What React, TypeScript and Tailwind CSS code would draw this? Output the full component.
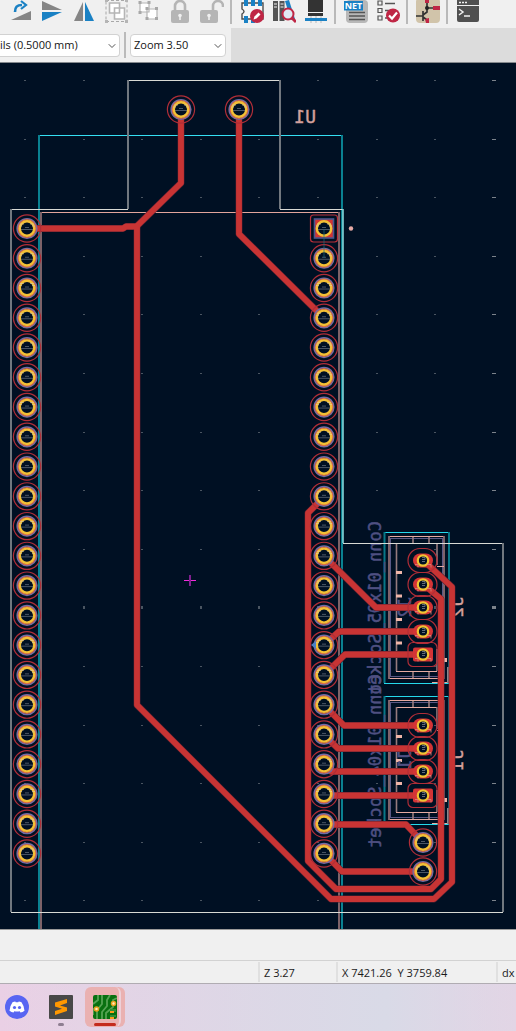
import React from "react";
import { ChevronDown } from "lucide-react";

const TRACKS = [
  "M181 109V183L137 226V705L331 899H434L452 882V587L423 560",
  "M27 228.5H123L126 226.5H137",
  "M239 109V234L324 318",
  "M324 497L308 513V861L336 889H431L441 879V599L423 584",
  "M324 556L376 607.5H423",
  "M324 645L339 631.5H423",
  "M324 675L345 654.5H423",
  "M324 705L344 725.5H423",
  "M324 735L338 748.5H423",
  "M324 764L331 771.5H423",
  "M324 795.5H423",
  "M324 824.5H406L423 842.5",
  "M324 853L342 871.5H423",
];

const ROWS = Array.from({ length: 22 }, (_, i) => 228.5 + i * 29.76);
const GRID_X = Array.from({ length: 9 }, (_, i) => Math.round(25 + i * 58.6));
const GRID_Y = Array.from({ length: 15 }, (_, i) => Math.round(80 + i * 58.6));

function Pad({ x, y, square = false }: { x: number; y: number; square?: boolean }) {
  return (
    <g transform={`translate(${x} ${y})`} fill="none">
      {square ? (
        <>
          <rect x="-13.5" y="-13.5" width="27" height="27" rx="3" stroke="#b8303a" strokeWidth="1.2" />
          <rect x="-9.5" y="-9.5" width="19" height="19" fill="#d03434" stroke="#4a558c" strokeWidth="1.6" />
        </>
      ) : (
        <>
          <circle r="13.6" stroke="#b02e38" strokeWidth="1.2" />
          <circle r="9.8" stroke="#6f6ca6" strokeWidth="1.6" fill="#061022" />
          <circle r="8.7" stroke="#d8684a" strokeWidth="1.4" />
        </>
      )}
      <circle r="7.2" stroke="#f3c035" strokeWidth="2.4" fill="#001023" />
      <path d="M-7 -4.5h4M3 -4.500h4M-8 -2.500h3M5 -2.500h3" stroke="#e0cdb0" opacity=".6" />
      <path d="M-6 1h12M-2 -1h4" stroke="#6b7582" opacity=".7" />
    </g>
  );
}

function OvalPad({ x, y, square = false }: { x: number; y: number; square?: boolean }) {
  return (
    <g transform={`translate(${x} ${y})`} fill="none">
      <rect x="-15" y="-12" width="29" height="24" rx={square ? 5 : 12} stroke="#b02e38" strokeWidth="1.2" />
      <rect x="-10" y="-7" width="20" height="14" rx={square ? 2 : 7} fill="#d43436" />
      <circle r="5.2" stroke="#efc433" strokeWidth="2.2" fill="#001023" />
      <path d="M-8 4h3v3M4 4h4v3" stroke="#db8b80" opacity=".8" />
      <path d="M-1 -3h3v2h-3M-1 1h3" stroke="#8a929b" opacity=".7" />
    </g>
  );
}

function Socket({ top, bottom, bars, mark }: { top: number; bottom: number; bars: number[]; mark: number }) {
  return (
    <g fill="none">
      <path d={`M384 ${top}.5H449M384 ${bottom}.5H449`} stroke="#25d9ec" />
      <path d={`M384.5 ${top}V${bottom}M449 ${top}V${bottom}`} stroke="#077888" strokeWidth="2" />
      <path d={`M389 ${top + 4}.5H444M389 ${bottom - 5}.5H444`} stroke="#e5aaa1" />
      <path d={`M389 ${top + 4}V${bottom - 4}M444 ${top + 4}V${bottom - 4}`} stroke="#8a6c72" strokeWidth="1.8" />
      <rect x="390.5" y={top + 6.5} width="52" height={bottom - top - 13} stroke="#5a5885" />
      <path d={`M396 ${top + 11}.5H437M396 ${bottom - 12}.5H437`} stroke="#e5aaa1" />
      <path
        d={`M396.5 ${top + 11}V${bottom - 12}M437 ${top + 11}V${top + 33}M437 ${bottom - 34}V${bottom - 12}M413 ${top + 5}v6M429 ${top + 5}v6M413 ${bottom - 11}v6M429 ${bottom - 11}v6`}
        stroke="#967a7d"
        strokeWidth="1.6"
      />
      <path d={`M437 ${top + 34}.5h7M432 ${bottom - 1}.5h16`} stroke="#e5aaa1" />
      <path d={`M448 ${bottom}v-16`} stroke="#8d8589" strokeWidth="2" />
      {bars.map((y) => (
        <path key={y} d={`M396 ${y}h6`} stroke="#efb5a8" strokeWidth="3" />
      ))}
      <path d={`M445 ${mark - 2}v4`} stroke="#efb5a8" strokeWidth="4" />
    </g>
  );
}

function Board() {
  return (
    <svg className="block h-auto w-full bg-[#001023]" viewBox="0 63 516 866" role="img" aria-label="Circuit board layout">
      {GRID_Y.map((y) =>
        GRID_X.map((x, i) => (
          <rect
            key={`${x}-${y}`}
            x={i === 8 ? x - 2 : x - 1}
            y={y === 607 ? y - 1 : y}
            width={i === 8 ? 4 : 2}
            height={y === 607 ? 3 : 1}
            fill={i === 8 ? "#7c838b" : "#4a5561"}
          />
        )),
      )}

      <Socket top={532} bottom={683} bars={[572.5, 596, 619.5, 643]} mark={660} />
      <Socket top={696} bottom={824} bars={[736.5, 760.5, 783.5]} mark={800} />

      <g fontFamily="'DejaVu Sans Mono', monospace" fontSize="17" fill="#4f5082" stroke="#4f5082" strokeWidth="0.5">
        <text transform="matrix(0 1 1 0 381 521)">Conn_01x05_Socket</text>
        <text transform="matrix(0 1 1 0 381 674)">Conn_01x04_Socket</text>
        <text transform="matrix(0 1 1 0 411 597)">J2</text>
        <text transform="matrix(0 1 1 0 411 749)">J1</text>
      </g>
      <g fontFamily="'DejaVu Sans Mono', monospace" fill="#d3a09c" stroke="#d3a09c" strokeWidth="0.4">
        <text fontSize="18" transform="matrix(-1 0 0 1 316 123)">U1</text>
        <text fontSize="17" transform="matrix(0 1 1 0 463 597)">J2</text>
        <text fontSize="17" transform="matrix(0 1 1 0 463 750)">J1</text>
      </g>

      <g fill="none">
        <path d="M41 212.5H339" stroke="#e2a59c" />
        <path d="M41 212V929M339 212V929" stroke="#7d6268" strokeWidth="2" />
        <path d="M39 135.5H342" stroke="#35dff2" />
        <path d="M39 135V929M342 135V929" stroke="#0a8292" strokeWidth="2" />
        <path d="M11 209.5H128M128 80.5H280M280 209.5H343M343 543.5H503M11 912.5H503" stroke="#d8dad5" />
        <path d="M11 209V912M128 80V209M280 80V209M503 543V912" stroke="#71787f" strokeWidth="2" />
        <path d="M343 209V543" stroke="#83d5d8" strokeWidth="1.6" />
      </g>

      <g fill="none" strokeLinecap="round" strokeLinejoin="round">
        {TRACKS.map((d) => (
          <path key={d} d={d} stroke="#5b2030" strokeWidth="6.8" />
        ))}
        {TRACKS.map((d) => (
          <path key={d} d={d} stroke="#c83434" strokeWidth="5.8" />
        ))}
      </g>

      {ROWS.map((y) => (
        <Pad key={y} x={27} y={y} />
      ))}
      {ROWS.map((y, i) => (
        <Pad key={y} x={324} y={y} square={i === 0} />
      ))}
      <path d="M311 645l5 -4v8z" fill="#4d7fc4" />
      <path d="M324 229V258" stroke="#1b6b79" opacity=".7" />
      <Pad x={181} y={109.5} />
      <Pad x={239} y={109.5} />
      <Pad x={423} y={842.5} />
      <Pad x={423} y={871.5} />
      {[560.5, 584.5, 607.5, 631.5, 654.5].map((y, i) => (
        <OvalPad key={y} x={423} y={y} square={i === 4} />
      ))}
      {[725.5, 748.5, 771.5, 795.5].map((y, i) => (
        <OvalPad key={y} x={423} y={y} square={i === 3} />
      ))}

      <circle cx="351" cy="228.5" r="2.2" fill="#e6aaa5" />
      <path d="M184 580.5h12" stroke="#f22bdc" />
      <path d="M190 575v11" stroke="#80208f" strokeWidth="2" />
    </svg>
  );
}

function ToolButton({ label, children }: { label: string; children: React.ReactNode }) {
  return (
    <button type="button" aria-label={label} className="h-7 w-6 shrink-0">
      <svg viewBox="0 0 24 28" className="block h-7 w-6" fill="none">
        {children}
      </svg>
    </button>
  );
}

function Divider() {
  return <span className="h-6 w-0.5 shrink-0 bg-[#b9b9b9]" />;
}

function Lock({ open = false }: { open?: boolean }) {
  return (
    <>
      <path d={open ? "M13 11V6a5 5 0 0 1 10 0v1" : "M7 11V6a5 5 0 0 1 10 0v5"} stroke="#b5b5b5" strokeWidth="2.6" />
      <rect x={open ? 0 : 3} y="10" width="18" height="13" rx="2" fill="#b5b5b5" />
      <circle cx={open ? 9 : 12} cy="15.5" r="1.8" fill="#f0f0f0" />
      <path d={open ? "M9 16v4" : "M12 16v4"} stroke="#f0f0f0" strokeWidth="1.6" />
    </>
  );
}

function Toolbar() {
  return (
    <div className="flex h-7 items-start gap-1.5 overflow-hidden bg-[#f0f0f0] pl-2">
      <div className="flex gap-2">
        <ToolButton label="Rotate">
          <path d="M3 20h20v-9z" fill="#858585" />
          <path d="M7 12C7 7 9 5 14 5" stroke="#1a81c4" strokeWidth="2.6" />
          <path d="M12 0M13 1l5 4l-5 4" stroke="#1a81c4" strokeWidth="2.2" />
        </ToolButton>
        <ToolButton label="Flip vertically">
          <path d="M2 1v9h20z" fill="#858585" />
          <path d="M2 21v-9h20z" fill="#1a81c4" />
        </ToolButton>
        <ToolButton label="Flip horizontally">
          <path d="M11 2v19H2z" fill="#858585" />
          <path d="M13 2v19h9z" fill="#1a81c4" />
        </ToolButton>
        <ToolButton label="Group">
          <rect x="2" y="0.5" width="21" height="21" stroke="#a8a8a8" strokeDasharray="3 2" />
          <path d="M1 0h3v2H1zM21 0h3v2h-3zM1 20h3v3H1zM21 20h3v3h-3z" fill="#b5b5b5" />
          <path d="M5.500 3h10v10h-10zM10.500 8h10v11h-10z" fill="#fff" stroke="#b5b5b5" strokeWidth="1.6" />
        </ToolButton>
        <ToolButton label="Ungroup">
          <path d="M4 3h9v9H4zM11 9h10v10H11z" fill="#fff" stroke="#b5b5b5" strokeWidth="1.2" />
          <path d="M2.500 1h3v3h-3zM11.500 1h3v3h-3zM2.500 11h3v3h-3zM9.500 7h3v3h-3zM19 7h3v3h-3zM9.500 17h3v3h-3zM19 17h3v3h-3z" fill="#a8a8a8" />
        </ToolButton>
        <ToolButton label="Lock">
          <Lock />
        </ToolButton>
        <ToolButton label="Unlock">
          <Lock open />
        </ToolButton>
      </div>
      <div className="flex gap-2">
        <Divider />
        <ToolButton label="Edit footprint">
          <path d="M2 3h21v16H2v-5q4 -2.500 0 -5z" fill="#f6f6f6" stroke="#4d4d4d" strokeWidth="1.4" />
          <path d="M4 0h4v6H4zM11 0h4v6h-4zM18 0h4v6h-4zM4 16h4v7H4zM11 16h4v7h-4z" fill="#1a81c4" />
          <circle cx="17" cy="16" r="7" fill="#bf2645" />
          <path d="M13.500 19.500l1-3l4-4l2 2l-4 4z" fill="#fff" />
        </ToolButton>
        <ToolButton label="Browse footprints">
          <path d="M1 1h5v20H1zM7.500 1h5v20h-5z" fill="#545454" />
          <path d="M2 4h3M2 7h3M8.500 4h3M8.500 7h3" stroke="#f0f0f0" />
          <path d="M13 1l4-1l6 19l-4 1z" fill="#1a81c4" />
          <circle cx="16" cy="14" r="5.5" fill="#dfeaf3" stroke="#bf2645" strokeWidth="2" />
          <path d="M20 18l4 4" stroke="#bf2645" strokeWidth="3" />
        </ToolButton>
        <ToolButton label="3D viewer">
          <path d="M4 0h15v12H4zM4 13h15v3H4z" fill="#333" />
          <path d="M7 16v7M12 16v7M17 16v7" stroke="#d5d5d5" strokeWidth="2" />
          <path d="M1 18h22v3H1z" fill="#1a81c4" />
        </ToolButton>
      </div>
      <div className="flex gap-2">
        <Divider />
        <ToolButton label="Netlist">
          <rect x="2" y="0" width="22" height="23" rx="4" fill="#b8b8b8" />
          <path d="M5 12.500h16M5 16h16M5 19.500h16" stroke="#545454" strokeWidth="1.5" />
          <rect y="1" width="19" height="9.500" fill="#1a81c4" />
          <text x="9.5" y="9" textAnchor="middle" fontFamily="'Open Sans', sans-serif" fontSize="9" fontWeight="700" fill="#fff">NET</text>
        </ToolButton>
        <ToolButton label="Design rules check">
          <path d="M2 1h4v4H2zM2 8.500h4v4H2zM2 16h4v4H2z" stroke="#555" strokeWidth="1.2" />
          <path d="M9 3.500h10M9 10.500h8M9 18h3" stroke="#555" strokeWidth="1.3" />
          <circle cx="17" cy="15.500" r="7" fill="#bf2645" />
          <path d="M13 15.500l3 3l5-6" stroke="#fff" strokeWidth="2.2" />
        </ToolButton>
      </div>
      <div className="flex gap-2">
        <Divider />
        <ToolButton label="Schematic">
          <rect y="-2" width="24" height="25" rx="4" fill="#d1c4aa" />
          <path d="M11 0v12L7 15M7 11v10M0 16h7M7 17l4 3M11 8h8" stroke="#333" strokeWidth="1.7" />
          <path d="M9 0h4v3H9zM17 6h7v4h-7zM9 19l4 -1v5h-3z" fill="#bf2645" />
          <circle cx="11" cy="8" r="2" fill="#222" />
        </ToolButton>
      </div>
      <div className="flex gap-2">
        <Divider />
        <ToolButton label="Scripting console">
          <rect x="1" y="-2" width="22" height="24" rx="2" fill="#505050" />
          <path d="M1 5.500h22" stroke="#f0f0f0" />
          <path d="M3 2.500h2M6 2.500h2M9 2.500h2M3 9l4 3l-4 3M8 16h6" stroke="#f0f0f0" strokeWidth="1.5" />
        </ToolButton>
      </div>
    </div>
  );
}

function DropDown({ label, value, cut = false }: { label: string; value: string; cut?: boolean }) {
  return (
    <label className={cut ? "relative block w-[120px]" : "relative block w-24"}>
      <span className="sr-only">{label}</span>
      <select
        className={
          "block h-[23px] w-full appearance-none border border-[#d2d2d2] bg-white text-[11px] leading-[16px] text-[#151515] " +
          (cut ? "rounded-r-sm border-l-0" : "rounded-sm pl-[3px]")
        }
      >
        <option>{value}</option>
      </select>
      <ChevronDown className="pointer-events-none absolute right-0.5 top-1.5 size-3 text-[#555]" strokeWidth={2} />
    </label>
  );
}

function Taskbar() {
  return (
    <nav aria-label="Taskbar" className="flex h-12 items-start bg-linear-to-r from-[#ead0e5] via-[#e4d3e5] via-50% to-[#e2d5e5]">
      <div className="flex h-12 w-full items-start bg-linear-to-r from-transparent via-[#d9dae7] via-75% to-transparent pl-[5px]">
        <button type="button" aria-label="Discord" className="mt-[11px] size-6">
          <svg viewBox="0 0 24 24" className="size-6">
            <circle cx="12" cy="12" r="12" fill="#5865f2" />
            <path d="M7.500 7.300Q9 6.500 10.300 6.500L10.700 7.300H13.300L13.700 6.500Q15 6.500 16.500 7.300Q19.500 11.500 19.500 15.800Q17.500 17.500 15.500 17.600L14.700 16.200Q12 16.800 9.300 16.200L8.500 17.600Q6.500 17.500 4.500 15.800Q4.500 11.500 7.500 7.300Z" fill="#fff" />
            <circle cx="9.500" cy="12.500" r="1.600" fill="#5865f2" />
            <circle cx="14.500" cy="12.500" r="1.600" fill="#5865f2" />
          </svg>
        </button>
        <button type="button" aria-label="Sublime Text" className="ml-5 mt-[11px] flex w-6 flex-col items-center gap-1">
          <svg viewBox="0 0 24 24" className="size-6">
            <rect width="24" height="24" rx="1" fill="#484848" />
            <path d="M6 7.500L18 4V8L11 10.500L18 12.500V16L6 20V16L13 13.700L6 11.500Z" fill="#ff9800" />
          </svg>
          <span className="h-[3px] w-1.5 rounded-full bg-[#8e7e91]" />
        </button>
        <button type="button" aria-label="PCB Editor" className="ml-3 mt-[3px] flex h-10 w-10 rounded-md bg-[#eab1b1]">
          <span className="flex h-10 w-9 flex-col items-center gap-1 rounded-md border-r-2 border-[#edd0d8] pl-1.5 pt-2">
            <svg viewBox="0 0 24 24" className="size-6 shrink-0">
              <rect width="24" height="24" rx="2" fill="#087010" />
              <path d="M0 9L5 5V0M4 24V15L9 9V0M9 24V17L14 11V5L17 0M13 24V18L20 12V5L24 3M0 20V13" fill="none" stroke="#55a354" strokeWidth="1.800" />
              <path d="M17 14h6v3h-6zM17 20h6v2h-6z" fill="#338d35" />
              <circle cx="3.500" cy="14" r="2" fill="#fff0bd" stroke="#e8a01c" strokeWidth="1.500" />
              <circle cx="20.500" cy="8.500" r="2" fill="#fff0bd" stroke="#e8a01c" strokeWidth="1.500" />
              <path d="M17 17h4M17 23h4" stroke="#ff9c19" strokeWidth="2" />
            </svg>
            <span className="h-[3px] w-[22px] shrink-0 rounded-full bg-[#c42b1c]" />
          </span>
        </button>
      </div>
    </nav>
  );
}

export default function App() {
  return (
    <main className="w-full overflow-hidden bg-[#f0f0f0] font-['Open_Sans','Noto_Sans',sans-serif] text-[#1b1b1b]">
      <Toolbar />
      <div className="flex h-[35px] border-b border-[#85898d] bg-[#dcdcdc]">
        <div className="flex items-center gap-1 bg-[#f0f0f0] pr-[5px]">
          <DropDown label="Track width" value="ils (0.5000 mm)" cut />
          <span className="h-[26px] w-0.5 bg-[#bababa]" />
          <DropDown label="Zoom" value="Zoom 3.50" />
        </div>
      </div>
      <Board />
      <div className="h-8 border-b border-t border-b-[#d2d2d2] border-t-[#9a9a9a]" />
      <footer className="flex h-[23px] items-stretch border-b border-[#b0acb2] py-px text-[11px] leading-[21px] whitespace-pre">
        <span className="flex-1" />
        <span className="w-[78px] border-l-2 border-[#e0e0e0] pl-1">Z 3.27</span>
        <span className="w-40 border-l-2 border-[#e0e0e0] pl-1">X 7421.26  Y 3759.84</span>
        <span className="w-5 border-l-2 border-[#e0e0e0] pl-1">dx</span>
      </footer>
      <Taskbar />
    </main>
  );
}
